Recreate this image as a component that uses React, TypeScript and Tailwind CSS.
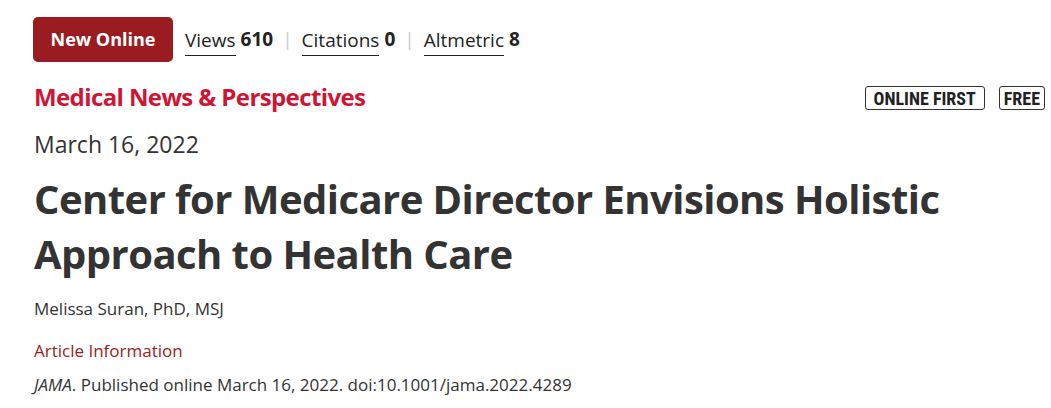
export default function App() {
  const font = { fontFamily: '"Open Sans", "Noto Sans", sans-serif' }
  return (
    <div className="w-[1051px] h-[408px] bg-white text-[#333]" style={font}>
      <div className="pl-[33px] pr-[6px] pt-[17px]">
        <div className="flex items-center h-[45px]">
          <span className="flex items-center justify-center w-[140px] h-[45px] rounded-[5px] bg-[#9b1c20] text-white text-[18px] font-bold">
            New Online
          </span>
          <div className="flex items-center ml-[12px] text-[19px] text-[#222]">
            <span className="border-b border-[#222] leading-[22px] pt-[6px] pb-[4px]">Views</span>
            <span className="ml-[5px] font-bold">610</span>
            <span className="mx-[9px] text-[#ccc]">|</span>
            <span className="border-b border-[#222] leading-[22px] pt-[6px] pb-[4px]">Citations</span>
            <span className="ml-[5px] font-bold">0</span>
            <span className="mx-[9px] text-[#ccc]">|</span>
            <span className="border-b border-[#222] leading-[22px] pt-[6px] pb-[4px]">Altmetric</span>
            <span className="ml-[5px] font-bold">8</span>
          </div>
        </div>
        <div className="flex items-center justify-between mt-[20px] pl-[1px]">
          <h3 className="text-[24px] leading-[30px] font-bold tracking-[-0.6px] text-[#cf1434]">Medical News &amp; Perspectives</h3>
          <div className="flex items-center gap-[14px] mt-[2px]" style={{ fontFamily: '"Liberation Sans Narrow", "Roboto Condensed", "Roboto", sans-serif' }}>
            <span className="border-[1.5px] border-[#333] rounded-[3px] h-[24px] px-[8px] flex items-center text-[18px] font-bold text-[#222]">ONLINE FIRST</span>
            <span className="border-[1.5px] border-[#333] rounded-[3px] h-[24px] px-[4px] flex items-center text-[18px] font-bold text-[#222]">FREE</span>
          </div>
        </div>
        <div className="mt-[17px] pl-[1px] text-[23px] leading-[30px] text-[#333]">March 16, 2022</div>
        <h1 className="mt-[12px] pl-[1px] text-[40px] leading-[55px] font-bold tracking-[-0.55px] text-[#333]">
          Center for Medicare Director Envisions Holistic
          <br />
          Approach to Health Care
        </h1>
        <div className="mt-[17px] pl-[1px] text-[17px] leading-[22px] text-[#333]">Melissa Suran, PhD, MSJ</div>
        <div className="mt-[20px] pl-[1px] text-[17px] leading-[22px] text-[#9b1c20]">Article Information</div>
        <div className="mt-[12px] pl-[1px] text-[17px] leading-[22px] text-[#333]">
          <i>JAMA</i>. Published online March 16, 2022. doi:10.1001/jama.2022.4289
        </div>
      </div>
    </div>
  )
}
